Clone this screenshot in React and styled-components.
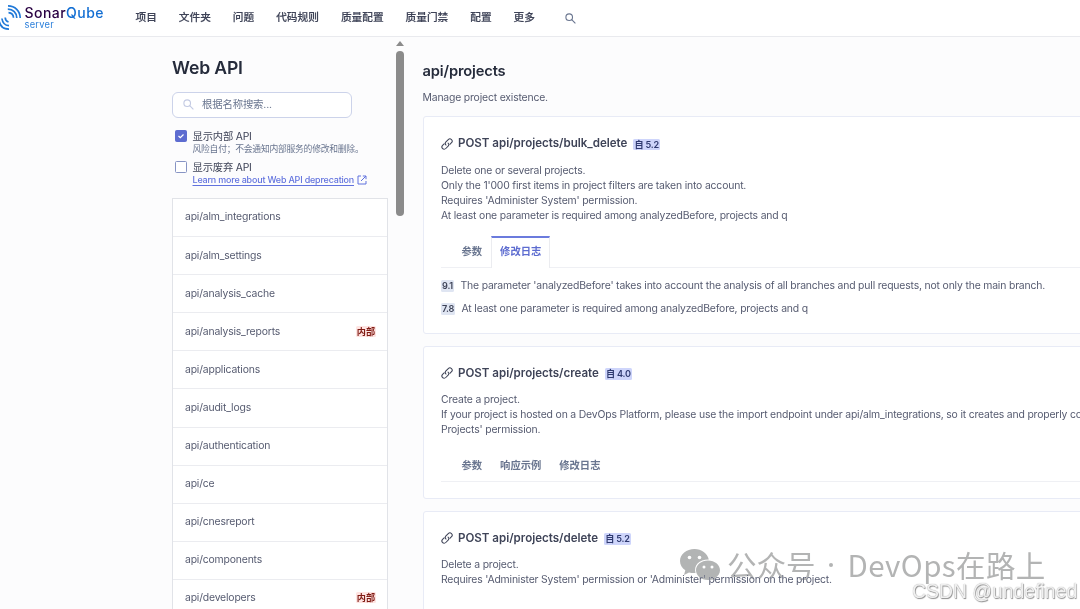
import React from 'react';
import styled, { createGlobalStyle } from 'styled-components';

const GlobalStyle = createGlobalStyle`
  * { box-sizing: border-box; }
  html, body { margin: 0; padding: 0; }
  body {
    background: #fcfcfd;
    color: #565b70;
    font-family: Inter, "Noto Sans CJK SC", sans-serif;
    font-size: 10.4px;
    letter-spacing: -0.17px;
    line-height: 15.2px;
    overflow: hidden;
  }
  h1, h2, h3, p, ul { margin: 0; padding: 0; font-weight: inherit; }
`;

const Page = styled.div`
  position: relative;
  width: 1080px;
  height: 609px;
  overflow: hidden;
  display: flex;
  flex-direction: column;
  background: #fcfcfd;
`;

const TopBar = styled.header`
  flex: none;
  height: 37px;
  background: #fff;
  border-bottom: 1px solid #e9eaee;
  display: flex;
  align-items: flex-start;
`;

const Brand = styled.div`
  width: 135.5px;
  display: flex;
`;

const BrandMark = styled.svg`
  width: 22px;
  height: 36px;
  flex: none;
`;

const BrandText = styled.div`
  padding: 5px 0 0 2.5px;
  font-size: 14px;
  font-weight: 500;
  line-height: 16px;
  letter-spacing: 0.45px;
  white-space: nowrap;
  color: #290042;
`;

const BrandBlue = styled.span`
  color: #126ed3;
`;

const BrandSub = styled.div`
  color: #2b7fda;
  font-size: 9.3px;
  font-weight: 400;
  line-height: 10px;
  margin-top: -1.5px;
  letter-spacing: 0.25px;
`;

const Nav = styled.nav`
  display: flex;
  align-items: center;
  gap: 22px;
  height: 35px;
  color: #3e4357;
  font-size: 10.68px;
  letter-spacing: 0;
  font-weight: 500;
  white-space: nowrap;
  -webkit-text-stroke: 0.15px;
`;

const NavSearch = styled.span`
  display: flex;
  margin: 2px 0 0 8px;

  svg { width: 11px; height: 11px; }
`;

const Body = styled.div`
  flex: 1;
  min-height: 0;
  display: flex;
`;

const Sidebar = styled.aside`
  flex: none;
  width: 224px;
  margin-left: 172px;
  padding-top: 18px;
`;

const Title = styled.h1`
  font-size: 17.6px;
  letter-spacing: -0.15px;
  line-height: 25px;
  font-weight: 600;
  color: #252b3b;
`;

const SearchBox = styled.div`
  margin-top: 12px;
  width: 180px;
  height: 25.5px;
  border: 1px solid #ccd3ea;
  border-radius: 6px;
  background: #fff;
  display: flex;
  align-items: center;
  gap: 8px;
  padding: 0 10px;
  color: #69758f;

  svg { width: 11px; height: 11px; }
`;

const CheckRow = styled.div`
  display: flex;
  gap: 5.5px;
  height: 31.4px;
  padding-left: 3px;
  line-height: 14px;
  color: #3e4357;
  white-space: nowrap;
`;

const Checks = styled.div`
  margin-top: 11px;
  height: 69.5px;
`;

const CheckBox = styled.span`
  flex: none;
  width: 12px;
  height: 12px;
  margin-top: 1.5px;
  border: 1px solid ${(p) => (p.$on ? '#5d6cd0' : '#8794c4')};
  border-radius: 1.5px;
  background: ${(p) => (p.$on ? '#5d6cd0' : '#fff')};
  display: flex;
  align-items: center;
  justify-content: center;
`;

const CheckLabel = styled.div`
  font-size: 10.3px;
`;

const CheckHint = styled.div`
  font-size: 8.8px;
  letter-spacing: -0.25px;
  line-height: 12px;
  color: #69758f;
`;

const DocLink = styled.a`
  display: flex;
  align-items: center;
  gap: 3px;
  font-size: 8.95px;
  letter-spacing: -0.17px;
  line-height: 12px;
  color: #6172de;
  font-weight: 500;

  span { text-decoration: underline; text-underline-offset: 1.5px; }
  svg { width: 10px; height: 10px; }
`;

const ApiList = styled.ul`
  list-style: none;
  width: 216px;
  border: 1px solid #e1e3e8;
  background: #fff;
`;

const ApiItem = styled.li`
  height: 38.1px;
  border-bottom: 1px solid #ebecf0;
  padding: 0 11.5px 1px 12px;
  display: flex;
  align-items: center;
  justify-content: space-between;
`;

const InternalTag = styled.span`
  background: #fee4e2;
  color: #801b14;
  font-size: 9.15px;
  letter-spacing: 0;
  font-weight: 700;
  line-height: 11px;
  border-radius: 1.5px;
  padding: 0 0.5px;
`;

const ScrollTrack = styled.div`
  flex: none;
  width: 8px;
  padding-top: 4px;
  display: flex;
  flex-direction: column;
  align-items: center;
  gap: 5px;

  svg { width: 8px; height: 5px; }
`;

const ScrollThumb = styled.div`
  width: 8px;
  height: 165px;
  border-radius: 4px;
  background: #8b8b8b;
`;

const Main = styled.main`
  flex: 1;
  min-width: 0;
  padding: 24px 0 0 18.5px;
`;

const DomainTitle = styled.h2`
  font-size: 14.7px;
  letter-spacing: -0.15px;
  line-height: 20px;
  font-weight: 600;
  color: #252b3b;
`;

const DomainText = styled.p`
  margin: 8.5px 0 11.5px;
`;

const Card = styled.section`
  width: 740px;
  height: ${(p) => p.$h}px;
  margin-bottom: 12px;
  padding: 18.3px 0 0 17.5px;
  background: #fff;
  border: 1px solid #e8ebf6;
  border-radius: 3px;
`;

const CardHead = styled.h3`
  display: flex;
  align-items: center;
  height: 17px;
  font-size: 11.55px;
  letter-spacing: 0;
  font-weight: 600;
  color: #3e4357;
  white-space: nowrap;

  svg { width: 12px; height: 12px; margin-right: 5px; }
`;

const Since = styled.span`
  margin-left: 6px;
  padding: 0 1.2px;
  border-radius: 1.5px;
  background: #ced5fb;
  color: #2f3a70;
  font-size: 9.15px;
  letter-spacing: -0.25px;
  line-height: 11.5px;
  margin-top: 1px;
`;

const Description = styled.div`
  margin-top: 10.2px;
  white-space: nowrap;
`;

const Tabs = styled.div`
  display: flex;
  margin-top: 12px;
  height: 32px;
  padding-left: 11.5px;
  border-bottom: 1px solid #eff0f4;
`;

const Tab = styled.div`
  height: 32px;
  padding: 0 8px;
  border: 1px solid ${(p) => (p.$active ? '#ebecf0' : 'transparent')};
  border-top: 2px solid ${(p) => (p.$active ? '#6b7bdd' : 'transparent')};
  border-bottom: 0;
  background: ${(p) => (p.$active ? '#fff' : 'transparent')};
  color: ${(p) => (p.$active ? '#5d6cd0' : '#69758f')};
  font-weight: 600;
  font-size: 10.3px;
  letter-spacing: 0;
  line-height: 26.5px;
`;

const ChangeRow = styled.div`
  display: flex;
  align-items: center;
  gap: 6.5px;
  height: 15px;
  margin-bottom: 8px;
  white-space: nowrap;
`;

const Changes = styled.div`
  padding-top: 10.8px;
`;

const Version = styled.span`
  min-width: 13px;
  padding: 0 1px;
  border-radius: 1.5px;
  background: #dfe5f2;
  color: #3e4357;
  font-size: 9.15px;
  letter-spacing: -0.2px;
  font-weight: 600;
  line-height: 11.5px;
`;

const Watermark = styled.div`
  position: absolute;
  left: 680px;
  top: 543px;
  height: 42px;
  display: flex;
  align-items: center;
  color: #b3b4b4;
  mix-blend-mode: darken;
  font-family: "Noto Sans CJK SC", sans-serif;
  font-size: 29.5px;
  font-weight: 400;
  letter-spacing: 0;
  line-height: 42px;
  white-space: nowrap;

  svg { width: 40px; height: 32px; margin: 2px 7px 0 0; }
`;

const WatermarkDot = styled.span`
  width: 4px;
  height: 4px;
  border-radius: 50%;
  background: #b3b4b4;
  margin: 2px 15px 0 13px;
`;

const WatermarkName = styled.span`
  letter-spacing: 0.4px;
`;

const Credit = styled.div`
  position: absolute;
  left: 912px;
  top: 580px;
  color: #f0f0f0;
  letter-spacing: 0;
  font: 19.4px/23px "Liberation Sans", sans-serif;
  text-shadow: 0 0 1px #999, 0.7px 0.7px 1px #8c8c8c;
  white-space: nowrap;
`;

const SearchGlyph = ({ color }) => (
  <svg viewBox="0 0 11 11" fill="none" stroke={color} strokeWidth="1.1">
    <circle cx="4.2" cy="4.2" r="3.3" />
    <path d="M6.7 6.7L10.4 10.4" />
  </svg>
);

const LinkGlyph = () => (
  <svg viewBox="0 0 16 16" fill="none" stroke="#3e4357" strokeWidth="1.4" strokeLinecap="round">
    <path d="M6.700 9.400A3 3 0 0 1 6.600 5.200L9.700 2.100A3 3 0 0 1 14 6.300L11.900 8.400" />
    <path d="M9.400 6.700A3 3 0 0 1 9.500 10.900L6.400 14A3 3 0 0 1 2.100 9.800L4.200 7.700" />
  </svg>
);

const apis = [
  ['api/alm_integrations'], ['api/alm_settings'], ['api/analysis_cache'],
  ['api/analysis_reports', true], ['api/applications'], ['api/audit_logs'],
  ['api/authentication'], ['api/ce'], ['api/cnesreport'], ['api/components'],
  ['api/developers', true],
];

const endpoints = [
  {
    path: 'POST api/projects/bulk_delete', since: '5.2', height: 217.3,
    lines: [
      'Delete one or several projects.',
      "Only the 1'000 first items in project filters are taken into account.",
      "Requires 'Administer System' permission.",
      'At least one parameter is required among analyzedBefore, projects and q',
    ],
    tabs: ['参数', '修改日志'], active: 1,
    changes: [
      ['9.1', "The parameter 'analyzedBefore' takes into account the analysis of all branches and pull requests, not only the main branch."],
      ['7.8', 'At least one parameter is required among analyzedBefore, projects and q'],
    ],
  },
  {
    path: 'POST api/projects/create', since: '4.0', height: 153,
    lines: [
      'Create a project.',
      'If your project is hosted on a DevOps Platform, please use the import endpoint under api/alm_integrations, so it creates and properly configures',
      "Projects' permission.",
    ],
    tabs: ['参数', '响应示例', '修改日志'],
  },
  {
    path: 'POST api/projects/delete', since: '5.2', height: 160,
    lines: ['Delete a project.', "Requires 'Administer System' permission or 'Administer' permission on the project."],
  },
];

const Endpoint = ({ path, since, height, lines, tabs, active, changes }) => (
  <Card $h={height}>
    <CardHead><LinkGlyph />{path}<Since>自 {since}</Since></CardHead>
    <Description>{lines.map((l) => <p key={l}>{l}</p>)}</Description>
    {tabs && <Tabs>{tabs.map((t, i) => <Tab key={t} $active={i === active}>{t}</Tab>)}</Tabs>}
    {changes && (
      <Changes>
        {changes.map(([v, text]) => <ChangeRow key={v}><Version>{v}</Version>{text}</ChangeRow>)}
      </Changes>
    )}
  </Card>
);

export default function App() {
  return (
    <Page>
      <GlobalStyle />
      <TopBar>
        <Brand>
          <BrandMark viewBox="0 0 22 36" fill="none" stroke="#2079d8" strokeWidth="1.7">
            <path d="M8 5.8C15 5.8 20.2 11 20.2 18" />
            <path d="M7.8 9.2C13 9.2 16.8 13 16.8 18" />
            <path d="M8.5 12.7C11.5 13 13.4 15 13.5 17.7" />
            <path d="M9 29.2C4 29.2 0.3 26 -0.8 21.5" />
            <path d="M9 25.7C5 25.4 2.5 22.7 1.9 18.5" />
            <path d="M8.5 22C6.2 21.2 5.2 19.6 5.2 17.5" />
          </BrandMark>
          <BrandText>
            Sonar<BrandBlue>Qube</BrandBlue>
            <BrandSub>server</BrandSub>
          </BrandText>
        </Brand>
        <Nav>
          {['项目', '文件夹', '问题', '代码规则', '质量配置', '质量门禁', '配置', '更多'].map((n) => <span key={n}>{n}</span>)}
          <NavSearch><SearchGlyph color="#69758f" /></NavSearch>
        </Nav>
      </TopBar>
      <Body>
        <Sidebar>
          <Title>Web API</Title>
          <SearchBox><SearchGlyph color="#c3cae3" />根据名称搜索...</SearchBox>
          <Checks>
            <CheckRow>
              <CheckBox $on>
                <svg width="8" height="8" viewBox="0 0 8 8" fill="none" stroke="#fff" strokeWidth="1.2"><path d="M1.5 4L3.3 5.7L6.5 2.5" /></svg>
              </CheckBox>
              <div>
                <CheckLabel>显示内部 API</CheckLabel>
                <CheckHint>风险自付；不会通知内部服务的修改和删除。</CheckHint>
              </div>
            </CheckRow>
            <CheckRow>
              <CheckBox />
              <div>
                <CheckLabel>显示废弃 API</CheckLabel>
                <DocLink>
                  <span>Learn more about Web API deprecation</span>
                  <svg viewBox="0 0 10 10" fill="none" stroke="#6172de"><path d="M4 1H1v8h8V6M5.8 1H9v3.2M9 1L4 6" /></svg>
                </DocLink>
              </div>
            </CheckRow>
          </Checks>
          <ApiList>
            {apis.map(([name, internal]) => (
              <ApiItem key={name}>{name}{internal && <InternalTag>内部</InternalTag>}</ApiItem>
            ))}
          </ApiList>
        </Sidebar>
        <ScrollTrack>
          <svg viewBox="0 0 8 5" fill="#8b8b8b"><path d="M4 0L8 5H0Z" /></svg>
          <ScrollThumb />
        </ScrollTrack>
        <Main>
          <DomainTitle>api/projects</DomainTitle>
          <DomainText>Manage project existence.</DomainText>
          {endpoints.map((e) => <Endpoint key={e.path} {...e} />)}
        </Main>
      </Body>
      <Watermark>
        <svg viewBox="0 0 40 32">
          <path fill="#b2b4b4" d="M14.5 0C6.5 0 0 5.2 0 12c0 3.900 2 7 5.300 9.200L4 26l5-2.600c2 .6 4 .8 6.500.7C13.500 16 19.500 10.300 28.800 10.500 27.500 4.300 21.500 0 14.500 0Z" />
          <path fill="#b2b4b4" d="M28 11.500c-6.700 0-12 4.300-12 9.800s5.300 9.800 12 9.800c1.500 0 3-.2 4.300-.7l4 2-1-3.500c3-2 4.700-4.500 4.700-7.600 0-5.500-5.300-9.800-12-9.800Z" />
          <g fill="#fff"><circle cx="9.500" cy="8.500" r="1.800" /><circle cx="19.500" cy="8.500" r="1.800" /><circle cx="24" cy="18" r="1.500" /><circle cx="32" cy="18" r="1.500" /></g>
        </svg>
        <span>公众号</span>
        <WatermarkDot />
        <WatermarkName>DevOps在路上</WatermarkName>
      </Watermark>
      <Credit>CSDN @undefined</Credit>
    </Page>
  );
}
